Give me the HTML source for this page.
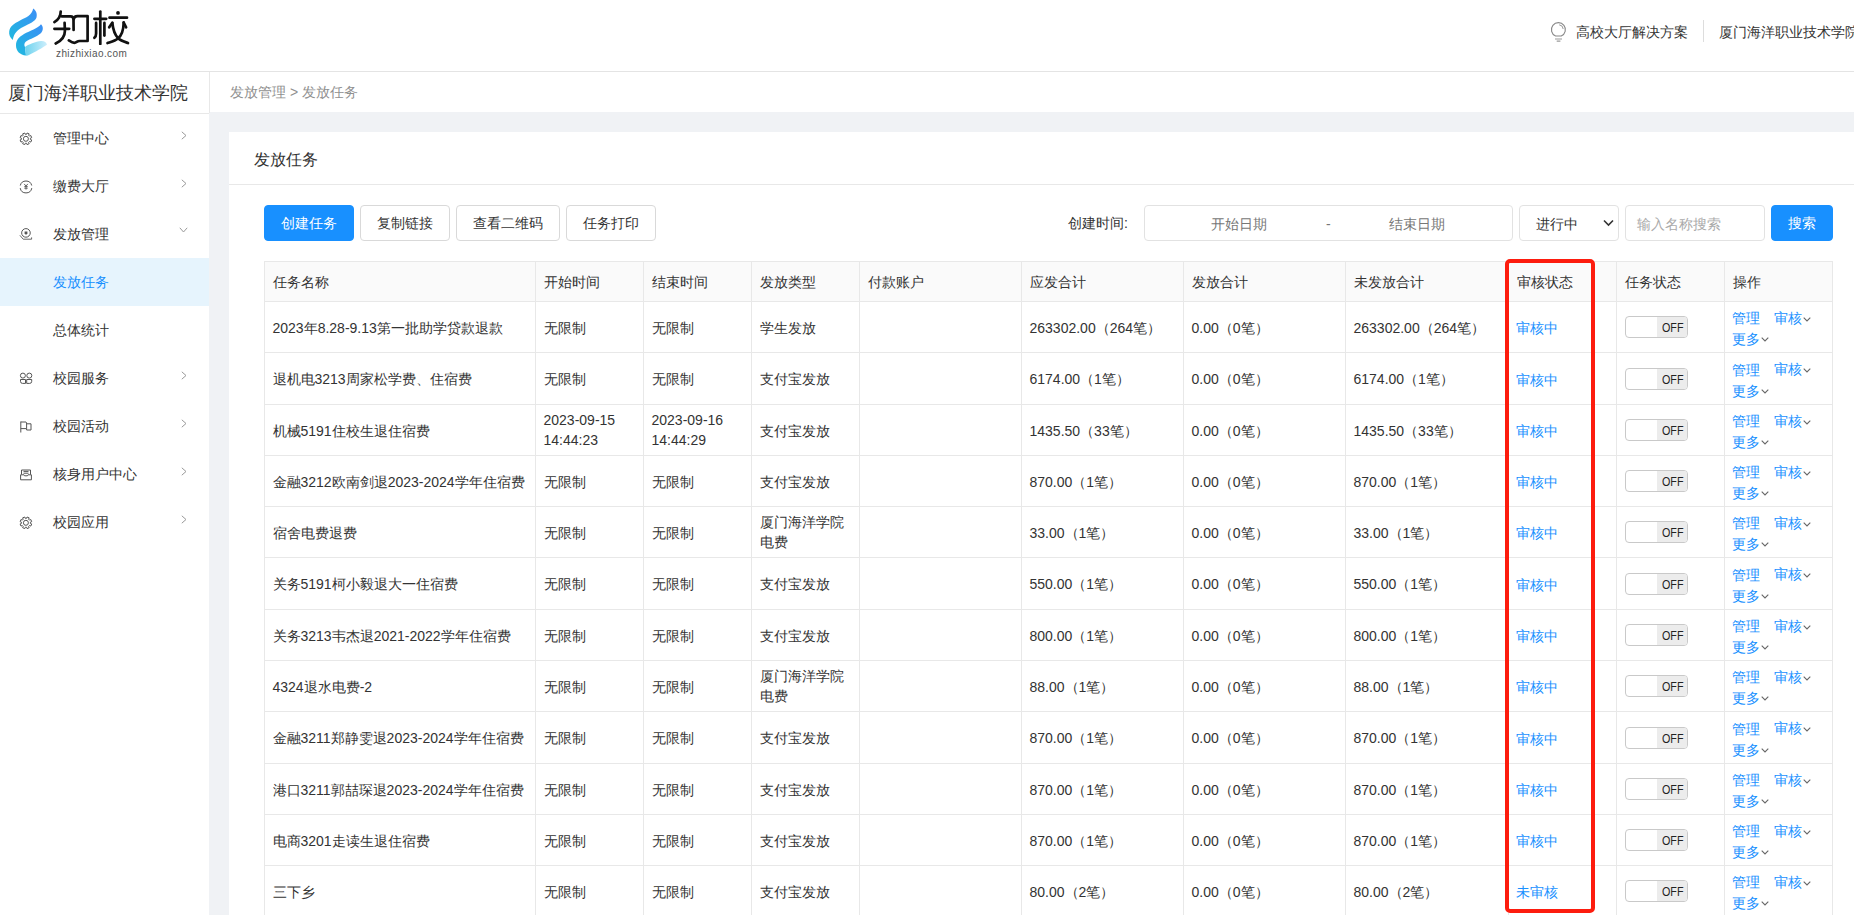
<!DOCTYPE html>
<html lang="zh"><head><meta charset="utf-8"><title>发放任务</title>
<style>
*{box-sizing:border-box;margin:0;padding:0}
html,body{width:1854px;height:915px;overflow:hidden}
body{position:relative;background:#f0f2f5;font-family:"Liberation Sans",sans-serif;color:#333;font-size:14px;line-height:20px}
.a{position:absolute;white-space:nowrap}
.t{position:absolute;white-space:nowrap;line-height:20px;height:20px}
.blue{color:#1890ff}
.vl{position:absolute;width:1px;background:#e8e8e8}
.hl{position:absolute;height:1px;background:#e8e8e8}
.btn{position:absolute;top:205px;height:36px;border:1px solid #d9d9d9;border-radius:4px;background:#fff;line-height:34px;text-align:center;color:#333}
.btn.p{background:#1890ff;border-color:#1890ff;color:#fff}
.tog{position:absolute;width:63px;height:22px;border:1px solid #c9c9c9;border-radius:4px;background:#fff;overflow:hidden}
.tog i{position:absolute;left:31px;top:0;width:31px;height:20px;background:#ececec;font-style:normal}
.tog b{position:absolute;left:5px;top:1px;font-weight:normal;font-size:12.5px;line-height:21px;color:#222;transform:scaleX(.86);transform-origin:0 0}
</style></head><body>

<div class="a" style="left:0;top:0;width:1854px;height:72px;background:#fff;border-bottom:1px solid #e4e4e4"></div>
<svg class="a" style="left:5px;top:5px" width="46" height="54" viewBox="0 0 46 54">
<defs>
<linearGradient id="g1" x1="0" y1="1" x2="1" y2="0"><stop offset="0" stop-color="#20b9de"/><stop offset="1" stop-color="#3b8ff6"/></linearGradient>
<linearGradient id="g2" x1="0" y1="1" x2="1" y2="0"><stop offset="0" stop-color="#1fbade"/><stop offset="1" stop-color="#3a8ef6"/></linearGradient>
<linearGradient id="g3" x1="0" y1="0" x2="1" y2="0"><stop offset="0" stop-color="#6dd3ee"/><stop offset="1" stop-color="#cdeefc"/></linearGradient>
</defs>
<path d="M28.2 3.6 C31 5.5 32.5 9 31.5 12.5 C30 16.5 25 18.5 18 22 C12.5 24.8 9 28 7.8 34.9 C5 32.5 3.8 29.5 4.2 26.5 C4.8 21.5 9 18.5 15 15.5 C21 12.5 27 10.5 28.2 3.6Z" fill="url(#g1)"/>
<path d="M36 19.2 C38.5 21.5 38.5 26 35.5 28.5 C32 31.5 25 34 21 36.5 C19 38 19 40.5 20 42 L21 50.5 C15 50 11 46 11 40.5 C11 35 14 32 19 29 C25 25.5 33 23.5 36 19.2Z" fill="url(#g2)"/>
<path d="M20 42 C23 39.5 31 36.5 36 36 C39.5 35.8 41.5 37.5 42 39.7 C38 42.5 30 47 24 50 C22.5 50.8 21.5 50.8 21 50.5 Z" fill="url(#g3)"/>
</svg>
<svg class="a" style="left:50px;top:5px" width="85" height="40" viewBox="0 0 85 40"><g fill="none" stroke="#111" stroke-width="2.7" stroke-linecap="round" stroke-linejoin="round">
<path d="M10.7 6.6 C10.7 10 9 14.5 4.4 17.1"/>
<path d="M11.6 11.3 L20.6 11.3 C22.5 11.3 23.5 12.5 23.5 14.5 L23.6 24.9"/>
<path d="M23.8 14 C24 12 25.5 11.1 27.5 11.1 L37.6 11.1 L37.6 36 L29.5 36 C27 36 26.5 37.8 24.5 37.8 C22.5 37.8 20.5 36.5 18.8 35.4"/>
<path d="M4.4 23.8 L19.2 23.8"/>
<path d="M14.6 17.9 L14.9 26 C14.9 31.5 11 36 5.7 38.5"/>
<path d="M50.3 6.6 L50.3 39"/>
<path d="M44.4 13.8 L56.2 13.8"/>
<path d="M46.1 17.9 L46.1 28.4 C46.1 30.5 45.5 31.8 44.4 32.8"/>
<path d="M54.4 17.9 L54.4 30.6"/>
<path d="M59.5 12.7 L77 12.7"/>
<path d="M62.3 17.9 L59.2 22.3"/>
<path d="M62.3 17.9 C63 24 65 30 68 33 C71 36 75 37 78 38"/>
<path d="M73.7 17.5 L76.1 22.3"/>
<path d="M73.7 17.5 C73.5 25 71 31 68 33.5 C65 36 60.5 37 57.5 38"/>
</g><circle cx="68" cy="7.9" r="1.9" fill="#111"/></svg>
<div class="a" style="left:56px;top:47.5px;font-size:10px;line-height:12px;color:#555;letter-spacing:0.4px">zhizhixiao.com</div>
<svg class="a" style="left:1549px;top:21px" width="19" height="22" viewBox="0 0 19 22"><path d="M6.6 15 A7 7 0 1 1 12.2 15 Z" fill="none" stroke="#888" stroke-width="1.1"/><path d="M10.2 3.8 A4.6 4.6 0 0 1 14.2 8" fill="none" stroke="#999" stroke-width="1"/><path d="M6 18 L13 18 M7.7 20.1 L11.4 20.1" stroke="#999" stroke-width="1.1"/></svg>
<div class="t" style="left:1576px;top:22px">高校大厅解决方案</div>
<div class="a" style="left:1703px;top:20px;width:1px;height:22px;background:#ddd"></div>
<div class="t" style="left:1719px;top:22px">厦门海洋职业技术学院</div>
<div class="a" style="left:0;top:72px;width:209px;height:843px;background:#fff"></div>
<div class="a" style="left:209px;top:72px;width:1px;height:41px;background:#e8e8e8"></div>
<div class="a" style="left:0;top:113px;width:209px;height:1px;background:#e8e8e8"></div>
<div class="a" style="left:8px;top:81px;font-size:18px;line-height:24px;color:#333">厦门海洋职业技术学院</div>
<div class="a" style="left:19px;top:131px;width:14px;height:14px"><svg width="14" height="14" viewBox="0 0 14 14"><path d="M11.36 7.40 L12.69 7.95 L11.81 10.08 L10.48 9.53 L9.63 10.38 L10.18 11.71 L8.05 12.59 L7.50 11.26 L6.30 11.26 L5.75 12.59 L3.62 11.71 L4.17 10.38 L3.32 9.53 L1.99 10.08 L1.11 7.95 L2.44 7.40 L2.44 6.20 L1.11 5.65 L1.99 3.52 L3.32 4.07 L4.17 3.22 L3.62 1.89 L5.75 1.01 L6.30 2.34 L7.50 2.34 L8.05 1.01 L10.18 1.89 L9.63 3.22 L10.48 4.07 L11.81 3.52 L12.69 5.65 L11.36 6.20Z" fill="none" stroke="#555" stroke-width="1" stroke-linejoin="round"/><circle cx="6.9" cy="6.8" r="2.5" fill="none" stroke="#555" stroke-width="1"/></svg></div>
<div class="t" style="left:53px;top:128px;color:#333">管理中心</div>
<div class="a" style="left:181px;top:131px;width:6px;height:9px;line-height:0"><svg width="6" height="9" viewBox="0 0 6 9"><path d="M0.8 0.8 L5 4.5 L0.8 8.2" fill="none" stroke="#999" stroke-width="1"/></svg></div>
<div class="a" style="left:19px;top:179px;width:14px;height:14px"><svg width="14" height="14" viewBox="0 0 14 14"><path d="M1.27 5.5 A5.9 5.9 0 0 1 12.73 5.5 M1.2 8.1 A5.9 5.9 0 0 0 12.8 8.1" fill="none" stroke="#555" stroke-width="1"/><path d="M5.2 3.9 L7 6.2 L8.8 3.9 M7 6.2 L7 9.6 M5.3 6.6 L8.7 6.6 M5.3 8.2 L8.7 8.2" fill="none" stroke="#555" stroke-width="0.9"/></svg></div>
<div class="t" style="left:53px;top:176px;color:#333">缴费大厅</div>
<div class="a" style="left:181px;top:179px;width:6px;height:9px;line-height:0"><svg width="6" height="9" viewBox="0 0 6 9"><path d="M0.8 0.8 L5 4.5 L0.8 8.2" fill="none" stroke="#999" stroke-width="1"/></svg></div>
<div class="a" style="left:19px;top:227px;width:14px;height:14px"><svg width="14" height="14" viewBox="0 0 14 14"><circle cx="6.95" cy="4.9" r="4.3" fill="none" stroke="#555" stroke-width="1"/><path d="M5.6 3.6 L8.4 3.6 L8.4 5.2 L7 6.9 L5.6 5.2Z" fill="#555"/><path d="M0.9 7.3 L4.2 11.2 L12.6 11.2 L12.6 9.4" fill="none" stroke="#666" stroke-width="1"/></svg></div>
<div class="t" style="left:53px;top:224px;color:#333">发放管理</div>
<div class="a" style="left:179px;top:227px;width:9px;height:6px;line-height:0"><svg width="9" height="6" viewBox="0 0 9 6"><path d="M0.8 0.8 L4.5 5 L8.2 0.8" fill="none" stroke="#999" stroke-width="1"/></svg></div>
<div class="a" style="left:0;top:258px;width:209px;height:48px;background:#e6f4fd"></div>
<div class="t" style="left:53px;top:272px;color:#1890ff">发放任务</div>
<div class="t" style="left:53px;top:320px;color:#333">总体统计</div>
<div class="a" style="left:19px;top:371px;width:14px;height:14px"><svg width="14" height="14" viewBox="0 0 14 14"><circle cx="3.9" cy="3.6" r="2.5" fill="none" stroke="#555" stroke-width="1"/><circle cx="10.3" cy="3.6" r="2.5" fill="none" stroke="#555" stroke-width="1"/><path d="M1.5 7.5 L6.5 7.5 L6.5 11.4 L3.5 11.4 A2 2 0 0 1 1.5 9.4Z M12.7 7.5 L7.7 7.5 L7.7 11.4 L10.7 11.4 A2 2 0 0 0 12.7 9.4Z" fill="none" stroke="#555" stroke-width="1"/></svg></div>
<div class="t" style="left:53px;top:368px;color:#333">校园服务</div>
<div class="a" style="left:181px;top:371px;width:6px;height:9px;line-height:0"><svg width="6" height="9" viewBox="0 0 6 9"><path d="M0.8 0.8 L5 4.5 L0.8 8.2" fill="none" stroke="#999" stroke-width="1"/></svg></div>
<div class="a" style="left:19px;top:419px;width:14px;height:14px"><svg width="14" height="14" viewBox="0 0 14 14"><path d="M1.8 1.5 L1.8 12.5 M1.8 2 L7 2 L7.6 2.8 L7.6 8.6 L1.8 8.6 M7.6 3.8 L12 3.8 L12 10 L7.6 10 L7.6 8.6" fill="none" stroke="#555" stroke-width="1"/></svg></div>
<div class="t" style="left:53px;top:416px;color:#333">校园活动</div>
<div class="a" style="left:181px;top:419px;width:6px;height:9px;line-height:0"><svg width="6" height="9" viewBox="0 0 6 9"><path d="M0.8 0.8 L5 4.5 L0.8 8.2" fill="none" stroke="#999" stroke-width="1"/></svg></div>
<div class="a" style="left:19px;top:467px;width:14px;height:14px"><svg width="14" height="14" viewBox="0 0 14 14"><path d="M2.5 6.5 L2.5 2 L11.5 2 L11.5 6.5 M4.5 3.4 L9.5 3.4 M4.5 5.2 L9.5 5.2 M1.6 6.8 L5 6.8 L5.6 7.8 L8.4 7.8 L9 6.8 L12.4 6.8 L12.4 11.8 L1.6 11.8 Z" fill="none" stroke="#555" stroke-width="1"/></svg></div>
<div class="t" style="left:53px;top:464px;color:#333">核身用户中心</div>
<div class="a" style="left:181px;top:467px;width:6px;height:9px;line-height:0"><svg width="6" height="9" viewBox="0 0 6 9"><path d="M0.8 0.8 L5 4.5 L0.8 8.2" fill="none" stroke="#999" stroke-width="1"/></svg></div>
<div class="a" style="left:19px;top:515px;width:14px;height:14px"><svg width="14" height="14" viewBox="0 0 14 14"><path d="M11.36 7.40 L12.69 7.95 L11.81 10.08 L10.48 9.53 L9.63 10.38 L10.18 11.71 L8.05 12.59 L7.50 11.26 L6.30 11.26 L5.75 12.59 L3.62 11.71 L4.17 10.38 L3.32 9.53 L1.99 10.08 L1.11 7.95 L2.44 7.40 L2.44 6.20 L1.11 5.65 L1.99 3.52 L3.32 4.07 L4.17 3.22 L3.62 1.89 L5.75 1.01 L6.30 2.34 L7.50 2.34 L8.05 1.01 L10.18 1.89 L9.63 3.22 L10.48 4.07 L11.81 3.52 L12.69 5.65 L11.36 6.20Z" fill="none" stroke="#555" stroke-width="1" stroke-linejoin="round"/><circle cx="6.9" cy="6.8" r="2.5" fill="none" stroke="#555" stroke-width="1"/></svg></div>
<div class="t" style="left:53px;top:512px;color:#333">校园应用</div>
<div class="a" style="left:181px;top:515px;width:6px;height:9px;line-height:0"><svg width="6" height="9" viewBox="0 0 6 9"><path d="M0.8 0.8 L5 4.5 L0.8 8.2" fill="none" stroke="#999" stroke-width="1"/></svg></div>
<div class="a" style="left:210px;top:72px;width:1644px;height:40px;background:#fff"></div>
<div class="t" style="left:230px;top:82px;color:#909090">发放管理 &gt; 发放任务</div>
<div class="a" style="left:229px;top:132px;width:1640px;height:800px;background:#fff"></div>
<div class="a" style="left:254px;top:148.5px;font-size:16px;line-height:22px;color:#333">发放任务</div>
<div class="a" style="left:229px;top:184px;width:1625px;height:1px;background:#e8e8e8"></div>
<div class="btn p" style="left:264px;width:90px">创建任务</div>
<div class="btn" style="left:360px;width:90px">复制链接</div>
<div class="btn" style="left:456px;width:104px">查看二维码</div>
<div class="btn" style="left:566px;width:90px">任务打印</div>
<div class="t" style="left:1068px;top:213px">创建时间:</div>
<div class="a" style="left:1144px;top:205px;width:369px;height:36px;border:1px solid #e2e2e2;border-radius:4px;background:#fff"></div>
<div class="t" style="left:1211px;top:213.5px;color:#777">开始日期</div>
<div class="t" style="left:1326px;top:213.5px;color:#777">-</div>
<div class="t" style="left:1389px;top:213.5px;color:#777">结束日期</div>
<div class="a" style="left:1519px;top:205px;width:100px;height:36px;border:1px solid #e2e2e2;border-radius:4px;background:#fff"></div>
<div class="t" style="left:1536px;top:213.5px;color:#333">进行中</div>
<svg class="a" style="left:1603px;top:219px" width="11" height="8" viewBox="0 0 11 8"><path d="M1 1.5 L5.5 6 L10 1.5" fill="none" stroke="#333" stroke-width="1.6"/></svg>
<div class="a" style="left:1625px;top:205px;width:140px;height:36px;border:1px solid #e2e2e2;border-radius:4px;background:#fff"></div>
<div class="t" style="left:1637px;top:213.5px;color:#aaa">输入名称搜索</div>
<div class="btn p" style="left:1771px;width:62px">搜索</div>
<div class="a" style="left:264px;top:261px;width:1569px;height:40px;background:#fafafa"></div>
<div class="hl" style="left:264px;top:261.00px;width:1569px"></div>
<div class="hl" style="left:264px;top:301.00px;width:1569px"></div>
<div class="hl" style="left:264px;top:352.00px;width:1569px"></div>
<div class="hl" style="left:264px;top:404.00px;width:1569px"></div>
<div class="hl" style="left:264px;top:455.00px;width:1569px"></div>
<div class="hl" style="left:264px;top:506.00px;width:1569px"></div>
<div class="hl" style="left:264px;top:557.00px;width:1569px"></div>
<div class="hl" style="left:264px;top:609.00px;width:1569px"></div>
<div class="hl" style="left:264px;top:660.00px;width:1569px"></div>
<div class="hl" style="left:264px;top:711.00px;width:1569px"></div>
<div class="hl" style="left:264px;top:763.00px;width:1569px"></div>
<div class="hl" style="left:264px;top:814.00px;width:1569px"></div>
<div class="hl" style="left:264px;top:865.00px;width:1569px"></div>
<div class="vl" style="left:264px;top:261px;height:654px"></div>
<div class="vl" style="left:535px;top:261px;height:654px"></div>
<div class="vl" style="left:643px;top:261px;height:654px"></div>
<div class="vl" style="left:751px;top:261px;height:654px"></div>
<div class="vl" style="left:859px;top:261px;height:654px"></div>
<div class="vl" style="left:1021px;top:261px;height:654px"></div>
<div class="vl" style="left:1183px;top:261px;height:654px"></div>
<div class="vl" style="left:1345px;top:261px;height:654px"></div>
<div class="vl" style="left:1508px;top:261px;height:654px"></div>
<div class="vl" style="left:1616px;top:261px;height:654px"></div>
<div class="vl" style="left:1724px;top:261px;height:654px"></div>
<div class="vl" style="left:1832px;top:261px;height:654px"></div>
<div class="t" style="left:272.5px;top:272px">任务名称</div>
<div class="t" style="left:543.5px;top:272px">开始时间</div>
<div class="t" style="left:651.5px;top:272px">结束时间</div>
<div class="t" style="left:759.5px;top:272px">发放类型</div>
<div class="t" style="left:867.5px;top:272px">付款账户</div>
<div class="t" style="left:1029.5px;top:272px">应发合计</div>
<div class="t" style="left:1191.5px;top:272px">发放合计</div>
<div class="t" style="left:1353.5px;top:272px">未发放合计</div>
<div class="t" style="left:1516.5px;top:272px">审核状态</div>
<div class="t" style="left:1624.5px;top:272px">任务状态</div>
<div class="t" style="left:1732.5px;top:272px">操作</div>
<div class="t" style="left:272.5px;top:317.50px">2023年8.28-9.13第一批助学贷款退款</div>
<div class="t" style="left:543.5px;top:317.50px">无限制</div>
<div class="t" style="left:651.5px;top:317.50px">无限制</div>
<div class="t" style="left:759.5px;top:317.50px">学生发放</div>
<div class="t" style="left:1029.5px;top:317.50px">263302.00（264笔）</div>
<div class="t" style="left:1191.5px;top:317.50px">0.00（0笔）</div>
<div class="t" style="left:1353.5px;top:317.50px">263302.00（264笔）</div>
<div class="t blue" style="left:1515.5px;top:318.00px">审核中</div>
<div class="tog" style="left:1625px;top:316.00px"><i><b>OFF</b></i></div>
<div class="t blue" style="left:1732px;top:308.00px">管理</div>
<div class="t blue" style="left:1774px;top:307.50px">审核</div>
<div class="a" style="left:1803px;top:316.50px;line-height:0"><svg width="8" height="5" viewBox="0 0 8 5"><path d="M0.7 0.7 L4 4 L7.3 0.7" fill="none" stroke="#666" stroke-width="1.1"/></svg></div>
<div class="t blue" style="left:1732px;top:329.00px">更多</div>
<div class="a" style="left:1761px;top:337.00px;line-height:0"><svg width="8" height="5" viewBox="0 0 8 5"><path d="M0.7 0.7 L4 4 L7.3 0.7" fill="none" stroke="#666" stroke-width="1.1"/></svg></div>
<div class="t" style="left:272.5px;top:369.00px">退机电3213周家松学费、住宿费</div>
<div class="t" style="left:543.5px;top:369.00px">无限制</div>
<div class="t" style="left:651.5px;top:369.00px">无限制</div>
<div class="t" style="left:759.5px;top:369.00px">支付宝发放</div>
<div class="t" style="left:1029.5px;top:369.00px">6174.00（1笔）</div>
<div class="t" style="left:1191.5px;top:369.00px">0.00（0笔）</div>
<div class="t" style="left:1353.5px;top:369.00px">6174.00（1笔）</div>
<div class="t blue" style="left:1515.5px;top:369.50px">审核中</div>
<div class="tog" style="left:1625px;top:367.50px"><i><b>OFF</b></i></div>
<div class="t blue" style="left:1732px;top:359.50px">管理</div>
<div class="t blue" style="left:1774px;top:359.00px">审核</div>
<div class="a" style="left:1803px;top:368.00px;line-height:0"><svg width="8" height="5" viewBox="0 0 8 5"><path d="M0.7 0.7 L4 4 L7.3 0.7" fill="none" stroke="#666" stroke-width="1.1"/></svg></div>
<div class="t blue" style="left:1732px;top:380.50px">更多</div>
<div class="a" style="left:1761px;top:388.50px;line-height:0"><svg width="8" height="5" viewBox="0 0 8 5"><path d="M0.7 0.7 L4 4 L7.3 0.7" fill="none" stroke="#666" stroke-width="1.1"/></svg></div>
<div class="t" style="left:272.5px;top:420.50px">机械5191住校生退住宿费</div>
<div class="a" style="left:543.5px;top:409.50px;line-height:20px;white-space:nowrap">2023-09-15<br>14:44:23</div>
<div class="a" style="left:651.5px;top:409.50px;line-height:20px;white-space:nowrap">2023-09-16<br>14:44:29</div>
<div class="t" style="left:759.5px;top:420.50px">支付宝发放</div>
<div class="t" style="left:1029.5px;top:420.50px">1435.50（33笔）</div>
<div class="t" style="left:1191.5px;top:420.50px">0.00（0笔）</div>
<div class="t" style="left:1353.5px;top:420.50px">1435.50（33笔）</div>
<div class="t blue" style="left:1515.5px;top:421.00px">审核中</div>
<div class="tog" style="left:1625px;top:419.00px"><i><b>OFF</b></i></div>
<div class="t blue" style="left:1732px;top:411.00px">管理</div>
<div class="t blue" style="left:1774px;top:410.50px">审核</div>
<div class="a" style="left:1803px;top:419.50px;line-height:0"><svg width="8" height="5" viewBox="0 0 8 5"><path d="M0.7 0.7 L4 4 L7.3 0.7" fill="none" stroke="#666" stroke-width="1.1"/></svg></div>
<div class="t blue" style="left:1732px;top:432.00px">更多</div>
<div class="a" style="left:1761px;top:440.00px;line-height:0"><svg width="8" height="5" viewBox="0 0 8 5"><path d="M0.7 0.7 L4 4 L7.3 0.7" fill="none" stroke="#666" stroke-width="1.1"/></svg></div>
<div class="t" style="left:272.5px;top:471.50px">金融3212欧南剑退2023-2024学年住宿费</div>
<div class="t" style="left:543.5px;top:471.50px">无限制</div>
<div class="t" style="left:651.5px;top:471.50px">无限制</div>
<div class="t" style="left:759.5px;top:471.50px">支付宝发放</div>
<div class="t" style="left:1029.5px;top:471.50px">870.00（1笔）</div>
<div class="t" style="left:1191.5px;top:471.50px">0.00（0笔）</div>
<div class="t" style="left:1353.5px;top:471.50px">870.00（1笔）</div>
<div class="t blue" style="left:1515.5px;top:472.00px">审核中</div>
<div class="tog" style="left:1625px;top:470.00px"><i><b>OFF</b></i></div>
<div class="t blue" style="left:1732px;top:462.00px">管理</div>
<div class="t blue" style="left:1774px;top:461.50px">审核</div>
<div class="a" style="left:1803px;top:470.50px;line-height:0"><svg width="8" height="5" viewBox="0 0 8 5"><path d="M0.7 0.7 L4 4 L7.3 0.7" fill="none" stroke="#666" stroke-width="1.1"/></svg></div>
<div class="t blue" style="left:1732px;top:483.00px">更多</div>
<div class="a" style="left:1761px;top:491.00px;line-height:0"><svg width="8" height="5" viewBox="0 0 8 5"><path d="M0.7 0.7 L4 4 L7.3 0.7" fill="none" stroke="#666" stroke-width="1.1"/></svg></div>
<div class="t" style="left:272.5px;top:522.50px">宿舍电费退费</div>
<div class="t" style="left:543.5px;top:522.50px">无限制</div>
<div class="t" style="left:651.5px;top:522.50px">无限制</div>
<div class="a" style="left:759.5px;top:511.50px;line-height:20px;white-space:nowrap">厦门海洋学院<br>电费</div>
<div class="t" style="left:1029.5px;top:522.50px">33.00（1笔）</div>
<div class="t" style="left:1191.5px;top:522.50px">0.00（0笔）</div>
<div class="t" style="left:1353.5px;top:522.50px">33.00（1笔）</div>
<div class="t blue" style="left:1515.5px;top:523.00px">审核中</div>
<div class="tog" style="left:1625px;top:521.00px"><i><b>OFF</b></i></div>
<div class="t blue" style="left:1732px;top:513.00px">管理</div>
<div class="t blue" style="left:1774px;top:512.50px">审核</div>
<div class="a" style="left:1803px;top:521.50px;line-height:0"><svg width="8" height="5" viewBox="0 0 8 5"><path d="M0.7 0.7 L4 4 L7.3 0.7" fill="none" stroke="#666" stroke-width="1.1"/></svg></div>
<div class="t blue" style="left:1732px;top:534.00px">更多</div>
<div class="a" style="left:1761px;top:542.00px;line-height:0"><svg width="8" height="5" viewBox="0 0 8 5"><path d="M0.7 0.7 L4 4 L7.3 0.7" fill="none" stroke="#666" stroke-width="1.1"/></svg></div>
<div class="t" style="left:272.5px;top:574.00px">关务5191柯小毅退大一住宿费</div>
<div class="t" style="left:543.5px;top:574.00px">无限制</div>
<div class="t" style="left:651.5px;top:574.00px">无限制</div>
<div class="t" style="left:759.5px;top:574.00px">支付宝发放</div>
<div class="t" style="left:1029.5px;top:574.00px">550.00（1笔）</div>
<div class="t" style="left:1191.5px;top:574.00px">0.00（0笔）</div>
<div class="t" style="left:1353.5px;top:574.00px">550.00（1笔）</div>
<div class="t blue" style="left:1515.5px;top:574.50px">审核中</div>
<div class="tog" style="left:1625px;top:572.50px"><i><b>OFF</b></i></div>
<div class="t blue" style="left:1732px;top:564.50px">管理</div>
<div class="t blue" style="left:1774px;top:564.00px">审核</div>
<div class="a" style="left:1803px;top:573.00px;line-height:0"><svg width="8" height="5" viewBox="0 0 8 5"><path d="M0.7 0.7 L4 4 L7.3 0.7" fill="none" stroke="#666" stroke-width="1.1"/></svg></div>
<div class="t blue" style="left:1732px;top:585.50px">更多</div>
<div class="a" style="left:1761px;top:593.50px;line-height:0"><svg width="8" height="5" viewBox="0 0 8 5"><path d="M0.7 0.7 L4 4 L7.3 0.7" fill="none" stroke="#666" stroke-width="1.1"/></svg></div>
<div class="t" style="left:272.5px;top:625.50px">关务3213韦杰退2021-2022学年住宿费</div>
<div class="t" style="left:543.5px;top:625.50px">无限制</div>
<div class="t" style="left:651.5px;top:625.50px">无限制</div>
<div class="t" style="left:759.5px;top:625.50px">支付宝发放</div>
<div class="t" style="left:1029.5px;top:625.50px">800.00（1笔）</div>
<div class="t" style="left:1191.5px;top:625.50px">0.00（0笔）</div>
<div class="t" style="left:1353.5px;top:625.50px">800.00（1笔）</div>
<div class="t blue" style="left:1515.5px;top:626.00px">审核中</div>
<div class="tog" style="left:1625px;top:624.00px"><i><b>OFF</b></i></div>
<div class="t blue" style="left:1732px;top:616.00px">管理</div>
<div class="t blue" style="left:1774px;top:615.50px">审核</div>
<div class="a" style="left:1803px;top:624.50px;line-height:0"><svg width="8" height="5" viewBox="0 0 8 5"><path d="M0.7 0.7 L4 4 L7.3 0.7" fill="none" stroke="#666" stroke-width="1.1"/></svg></div>
<div class="t blue" style="left:1732px;top:637.00px">更多</div>
<div class="a" style="left:1761px;top:645.00px;line-height:0"><svg width="8" height="5" viewBox="0 0 8 5"><path d="M0.7 0.7 L4 4 L7.3 0.7" fill="none" stroke="#666" stroke-width="1.1"/></svg></div>
<div class="t" style="left:272.5px;top:676.50px">4324退水电费-2</div>
<div class="t" style="left:543.5px;top:676.50px">无限制</div>
<div class="t" style="left:651.5px;top:676.50px">无限制</div>
<div class="a" style="left:759.5px;top:665.50px;line-height:20px;white-space:nowrap">厦门海洋学院<br>电费</div>
<div class="t" style="left:1029.5px;top:676.50px">88.00（1笔）</div>
<div class="t" style="left:1191.5px;top:676.50px">0.00（0笔）</div>
<div class="t" style="left:1353.5px;top:676.50px">88.00（1笔）</div>
<div class="t blue" style="left:1515.5px;top:677.00px">审核中</div>
<div class="tog" style="left:1625px;top:675.00px"><i><b>OFF</b></i></div>
<div class="t blue" style="left:1732px;top:667.00px">管理</div>
<div class="t blue" style="left:1774px;top:666.50px">审核</div>
<div class="a" style="left:1803px;top:675.50px;line-height:0"><svg width="8" height="5" viewBox="0 0 8 5"><path d="M0.7 0.7 L4 4 L7.3 0.7" fill="none" stroke="#666" stroke-width="1.1"/></svg></div>
<div class="t blue" style="left:1732px;top:688.00px">更多</div>
<div class="a" style="left:1761px;top:696.00px;line-height:0"><svg width="8" height="5" viewBox="0 0 8 5"><path d="M0.7 0.7 L4 4 L7.3 0.7" fill="none" stroke="#666" stroke-width="1.1"/></svg></div>
<div class="t" style="left:272.5px;top:728.00px">金融3211郑静雯退2023-2024学年住宿费</div>
<div class="t" style="left:543.5px;top:728.00px">无限制</div>
<div class="t" style="left:651.5px;top:728.00px">无限制</div>
<div class="t" style="left:759.5px;top:728.00px">支付宝发放</div>
<div class="t" style="left:1029.5px;top:728.00px">870.00（1笔）</div>
<div class="t" style="left:1191.5px;top:728.00px">0.00（0笔）</div>
<div class="t" style="left:1353.5px;top:728.00px">870.00（1笔）</div>
<div class="t blue" style="left:1515.5px;top:728.50px">审核中</div>
<div class="tog" style="left:1625px;top:726.50px"><i><b>OFF</b></i></div>
<div class="t blue" style="left:1732px;top:718.50px">管理</div>
<div class="t blue" style="left:1774px;top:718.00px">审核</div>
<div class="a" style="left:1803px;top:727.00px;line-height:0"><svg width="8" height="5" viewBox="0 0 8 5"><path d="M0.7 0.7 L4 4 L7.3 0.7" fill="none" stroke="#666" stroke-width="1.1"/></svg></div>
<div class="t blue" style="left:1732px;top:739.50px">更多</div>
<div class="a" style="left:1761px;top:747.50px;line-height:0"><svg width="8" height="5" viewBox="0 0 8 5"><path d="M0.7 0.7 L4 4 L7.3 0.7" fill="none" stroke="#666" stroke-width="1.1"/></svg></div>
<div class="t" style="left:272.5px;top:779.50px">港口3211郭喆琛退2023-2024学年住宿费</div>
<div class="t" style="left:543.5px;top:779.50px">无限制</div>
<div class="t" style="left:651.5px;top:779.50px">无限制</div>
<div class="t" style="left:759.5px;top:779.50px">支付宝发放</div>
<div class="t" style="left:1029.5px;top:779.50px">870.00（1笔）</div>
<div class="t" style="left:1191.5px;top:779.50px">0.00（0笔）</div>
<div class="t" style="left:1353.5px;top:779.50px">870.00（1笔）</div>
<div class="t blue" style="left:1515.5px;top:780.00px">审核中</div>
<div class="tog" style="left:1625px;top:778.00px"><i><b>OFF</b></i></div>
<div class="t blue" style="left:1732px;top:770.00px">管理</div>
<div class="t blue" style="left:1774px;top:769.50px">审核</div>
<div class="a" style="left:1803px;top:778.50px;line-height:0"><svg width="8" height="5" viewBox="0 0 8 5"><path d="M0.7 0.7 L4 4 L7.3 0.7" fill="none" stroke="#666" stroke-width="1.1"/></svg></div>
<div class="t blue" style="left:1732px;top:791.00px">更多</div>
<div class="a" style="left:1761px;top:799.00px;line-height:0"><svg width="8" height="5" viewBox="0 0 8 5"><path d="M0.7 0.7 L4 4 L7.3 0.7" fill="none" stroke="#666" stroke-width="1.1"/></svg></div>
<div class="t" style="left:272.5px;top:830.50px">电商3201走读生退住宿费</div>
<div class="t" style="left:543.5px;top:830.50px">无限制</div>
<div class="t" style="left:651.5px;top:830.50px">无限制</div>
<div class="t" style="left:759.5px;top:830.50px">支付宝发放</div>
<div class="t" style="left:1029.5px;top:830.50px">870.00（1笔）</div>
<div class="t" style="left:1191.5px;top:830.50px">0.00（0笔）</div>
<div class="t" style="left:1353.5px;top:830.50px">870.00（1笔）</div>
<div class="t blue" style="left:1515.5px;top:831.00px">审核中</div>
<div class="tog" style="left:1625px;top:829.00px"><i><b>OFF</b></i></div>
<div class="t blue" style="left:1732px;top:821.00px">管理</div>
<div class="t blue" style="left:1774px;top:820.50px">审核</div>
<div class="a" style="left:1803px;top:829.50px;line-height:0"><svg width="8" height="5" viewBox="0 0 8 5"><path d="M0.7 0.7 L4 4 L7.3 0.7" fill="none" stroke="#666" stroke-width="1.1"/></svg></div>
<div class="t blue" style="left:1732px;top:842.00px">更多</div>
<div class="a" style="left:1761px;top:850.00px;line-height:0"><svg width="8" height="5" viewBox="0 0 8 5"><path d="M0.7 0.7 L4 4 L7.3 0.7" fill="none" stroke="#666" stroke-width="1.1"/></svg></div>
<div class="t" style="left:272.5px;top:881.50px">三下乡</div>
<div class="t" style="left:543.5px;top:881.50px">无限制</div>
<div class="t" style="left:651.5px;top:881.50px">无限制</div>
<div class="t" style="left:759.5px;top:881.50px">支付宝发放</div>
<div class="t" style="left:1029.5px;top:881.50px">80.00（2笔）</div>
<div class="t" style="left:1191.5px;top:881.50px">0.00（0笔）</div>
<div class="t" style="left:1353.5px;top:881.50px">80.00（2笔）</div>
<div class="t blue" style="left:1515.5px;top:882.00px">未审核</div>
<div class="tog" style="left:1625px;top:880.00px"><i><b>OFF</b></i></div>
<div class="t blue" style="left:1732px;top:872.00px">管理</div>
<div class="t blue" style="left:1774px;top:871.50px">审核</div>
<div class="a" style="left:1803px;top:880.50px;line-height:0"><svg width="8" height="5" viewBox="0 0 8 5"><path d="M0.7 0.7 L4 4 L7.3 0.7" fill="none" stroke="#666" stroke-width="1.1"/></svg></div>
<div class="t blue" style="left:1732px;top:893.00px">更多</div>
<div class="a" style="left:1761px;top:901.00px;line-height:0"><svg width="8" height="5" viewBox="0 0 8 5"><path d="M0.7 0.7 L4 4 L7.3 0.7" fill="none" stroke="#666" stroke-width="1.1"/></svg></div>
<div class="a" style="left:1505px;top:259px;width:90px;height:654px;border:4px solid #fd1c0e;border-radius:5px"></div>
</body></html>
